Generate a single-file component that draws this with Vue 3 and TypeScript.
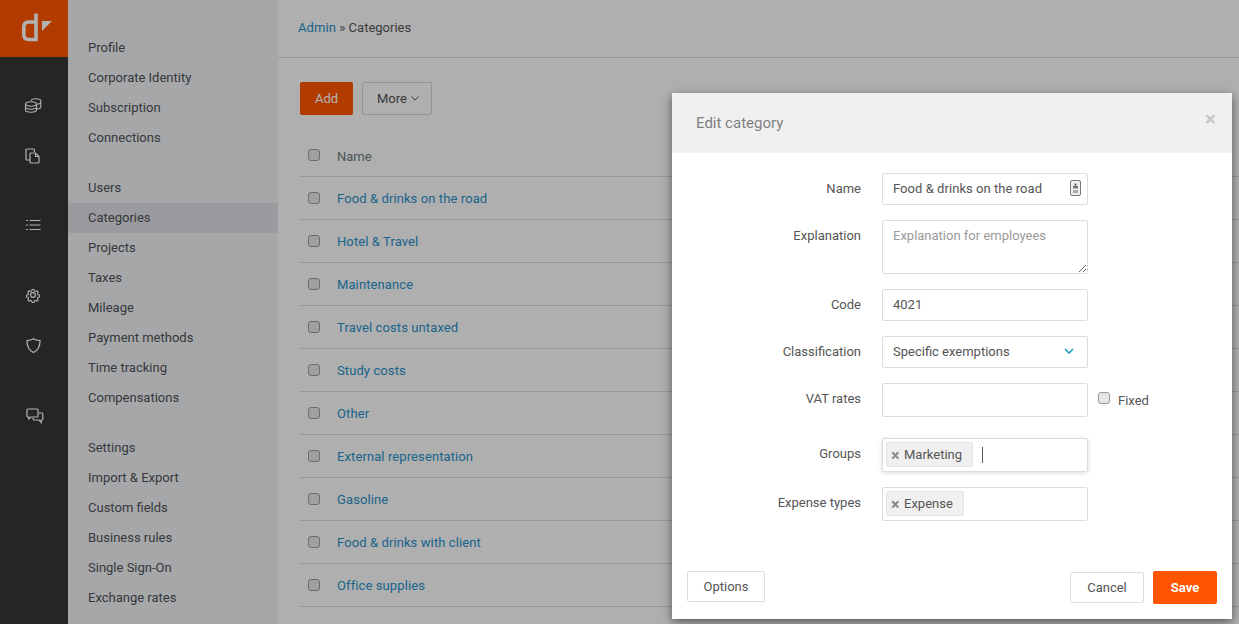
<script setup lang="ts">
const groups: string[][] = [
  ['Profile', 'Corporate Identity', 'Subscription', 'Connections'],
  ['Users', 'Categories', 'Projects', 'Taxes', 'Mileage', 'Payment methods', 'Time tracking', 'Compensations'],
  ['Settings', 'Import & Export', 'Custom fields', 'Business rules', 'Single Sign-On', 'Exchange rates'],
]
const rows: string[] = [
  'Food & drinks on the road', 'Hotel & Travel', 'Maintenance', 'Travel costs untaxed', 'Study costs',
  'Other', 'External representation', 'Gasoline', 'Food & drinks with client', 'Office supplies',
]
</script>

<template>
  <div class="page">
    <nav class="rail">
      <div class="logo">
        <svg width="68" height="57" viewBox="0 0 68 57">
          <path d="M36 13.5V39.5H29Q23.8 39.5 23.8 34.5V27Q23.8 22 29 22H36" fill="none" stroke="#fff" stroke-width="3.6"/>
          <path d="M42 21H52L42 31Z" fill="#fff"/>
        </svg>
      </div>
      <div class="rail-icons">
        <svg class="ri first" width="18" height="18" viewBox="0 0 18 18" fill="none" stroke="#fff" stroke-width="1.1">
          <ellipse cx="7" cy="8" rx="5.5" ry="2.2"/><path d="M1.500 8V14C1.500 15.200 4 16.200 7 16.200S12.500 15.200 12.500 14V8M1.500 11C1.500 12.200 4 13.200 7 13.200S12.500 12.200 12.500 11"/>
          <path d="M7 4.500C7.500 3.400 9.500 2.800 11.500 2.800C14.500 2.800 16.800 3.800 16.800 5V11C16.800 12 15 12.800 12.500 13M12.500 8.200C15 8.100 16.800 7.300 16.800 6"/>
        </svg>
        <svg class="ri second" width="16" height="18" viewBox="0 0 16 18" fill="none" stroke="#fff" stroke-width="1.2">
          <path d="M5 13H1.800A.8.8 0 0 1 1 12.200V2.800A.8.8 0 0 1 1.800 2H8.500A.8.8 0 0 1 9.300 2.800V5"/>
          <path d="M5 6.800A.8.8 0 0 1 5.800 6H10.500L14 9.500V15.200A.8.8 0 0 1 13.200 16H5.800A.8.8 0 0 1 5 15.200Z"/><path d="M10.500 6V9.500H14"/>
        </svg>
        <svg class="ri gap" width="16" height="14" viewBox="0 0 16 14" fill="none" stroke="#fff" stroke-width="1.2">
          <path d="M4.500 2.500H15.500M4.500 7H15.500M4.500 11.500H15.500M1 2.500H2.800M1 7H2.800M1 11.500H2.800"/>
        </svg>
        <svg class="ri gap2" width="16" height="16" viewBox="0 0 24 24" fill="none" stroke="#fff" stroke-width="1.800">
          <circle cx="12" cy="12" r="3.500"/>
          <path d="M10.300 2.500h3.400l.6 2.900 1.900.8 2.500-1.600 2.400 2.400-1.600 2.500.8 1.900 2.900.6v3.400l-2.900.6-.8 1.900 1.600 2.500-2.400 2.400-2.500-1.600-1.900.8-.6 2.900h-3.400l-.6-2.900-1.900-.8-2.500 1.600-2.400-2.400 1.600-2.500-.8-1.900-2.900-.6v-3.400l2.900-.6.8-1.900-1.600-2.500 2.400-2.400 2.500 1.600 1.900-.8z" transform="translate(1.600 1.600) scale(.87)"/>
        </svg>
        <svg class="ri shield" width="15" height="17" viewBox="0 0 16 17" fill="none" stroke="#fff" stroke-width="1.300">
          <path d="M8 1.200C10 2.500 12.500 3 15 3.200C15 9 13.500 13.500 8 16C2.500 13.500 1 9 1 3.200C3.500 3 6 2.500 8 1.200Z"/>
        </svg>
        <svg class="ri chat" width="18" height="16" viewBox="0 0 18 16" fill="none" stroke="#fff" stroke-width="1.200">
          <path d="M1.800 1H11.200A.9.9 0 0 1 12 1.800V8.200A.9.9 0 0 1 11.200 9H5L2.800 11V9H1.800A.9.9 0 0 1 1 8.200V1.800A.9.9 0 0 1 1.800 1Z"/>
          <path d="M12.500 5H16A.9.9 0 0 1 16.800 5.800V11.200A.9.9 0 0 1 16 12H15.200V14.500L13 12H8A.9.9 0 0 1 7.200 11.200V9.500"/>
        </svg>
      </div>
    </nav>

    <aside class="side">
      <ul v-for="(g, i) in groups" :key="i" class="side-group">
        <li v-for="item in g" :key="item" :class="{ active: item === 'Categories' }">{{ item }}</li>
      </ul>
    </aside>

    <main class="main">
      <header class="crumbs"><a class="link">Admin</a> » Categories</header>
      <div class="content">
        <div class="actions">
          <button class="btn primary add">Add</button>
          <button class="btn more">More
            <svg width="8" height="5" viewBox="0 0 8 5" fill="none" stroke="#555" stroke-width="1"><path d="M.5 .5L4 4L7.500 .5"/></svg>
          </button>
        </div>
        <div class="table">
          <div class="tr head"><input type="checkbox" class="check" /><span>Name</span></div>
          <div v-for="r in rows" :key="r" class="tr"><input type="checkbox" class="check" /><a class="link">{{ r }}</a></div>
        </div>
      </div>
    </main>

    <div class="overlay"></div>

    <section class="modal">
      <div class="modal-head">
        <h2>Edit category</h2>
        <span class="close">×</span>
      </div>
      <div class="form">
        <div class="row">
          <label>Name</label>
          <div class="field with-icon">
            <span>Food &amp; drinks on the road</span>
            <svg width="11" height="16" viewBox="0 0 11 16">
              <rect x=".5" y=".5" width="10" height="15" rx="1.500" fill="#eee" stroke="#777"/>
              <path d="M4.500 3.500H6.500V6H8V8.500H3V6H4.500Z" fill="#777"/><rect x="3" y="10" width="5" height="3" fill="#aaa"/>
            </svg>
          </div>
        </div>
        <div class="row">
          <label>Explanation</label>
          <textarea class="field area" placeholder="Explanation for employees"></textarea>
        </div>
        <div class="row"><label>Code</label><div class="field">4021</div></div>
        <div class="row">
          <label>Classification</label>
          <div class="field select">
            <span>Specific exemptions</span>
            <svg width="10" height="6" viewBox="0 0 10 6" fill="none" stroke="#1b9bc0" stroke-width="1.600"><path d="M1 1L5 5L9 1"/></svg>
          </div>
        </div>
        <div class="row vat">
          <label>VAT rates</label>
          <div class="field tall"></div>
          <label class="fixed"><input type="checkbox" class="check" /><span>Fixed</span></label>
        </div>
        <div class="row groups">
          <label>Groups</label>
          <div class="field tags focus">
            <span class="tag"><i>×</i>Marketing</span><span class="caret"></span>
          </div>
        </div>
        <div class="row">
          <label>Expense types</label>
          <div class="field tags">
            <span class="tag"><i>×</i>Expense</span>
          </div>
        </div>
      </div>
      <footer class="foot">
        <button class="btn white options">Options</button>
        <div class="foot-right">
          <button class="btn white cancel">Cancel</button>
          <button class="btn primary save">Save</button>
        </div>
      </footer>
    </section>
  </div>
</template>

<style>
html, body { margin: 0; height: 100%; overflow: hidden; background: #fff; }
</style>

<style scoped>
* { box-sizing: border-box; }
.page { position: relative; display: flex; width: 1239px; height: 624px; overflow: hidden; font-family: Roboto, "Liberation Sans", sans-serif; font-size: 13px; color: #555; background: #fbfbfb; }
.rail { flex: 0 0 68px; background: #353535; display: flex; flex-direction: column; }
.logo { height: 57px; background: #ff5500; }
.logo svg { display: block; }
.rail-icons { display: flex; flex-direction: column; align-items: center; padding-right: 2px; }
.ri { display: block; flex: none; }
.first { margin-top: 39px; }
.second { margin-top: 33px; }
.gap { margin-top: 53px; }
.gap2 { margin-top: 55px; }
.shield { margin-top: 34px; }
.chat { margin-top: 54px; margin-left: 3px; }
.side { flex: 0 0 210px; background: #eeeff2; padding-top: 33px; }
.side-group { list-style: none; margin: 0 0 20px; padding: 0; }
.side-group li { height: 30px; line-height: 29px; padding-left: 20px; color: #4f5258; }
.side-group li.active { background: #dcdfe2; }
.main { flex: 1; min-width: 0; }
.crumbs { height: 58px; padding: 0 20px; line-height: 55px; border-bottom: 1px solid #dcdcdc; color: #555; }
.link { color: #2790c8; letter-spacing: .1px; }
.content { padding: 24px 0 0 22px; }
.actions { display: flex; gap: 9px; height: 33px; }
.btn { font: inherit; border-radius: 2px; cursor: pointer; padding: 0; }
.primary { background: #ff5500; border: 0; color: #fff; }
.add { width: 53px; height: 33px; }
.more { width: 70px; height: 33px; background: transparent; border: 1px solid #d4d4d4; color: #555; padding-left: 2px; }
.more svg { margin-left: 1px; vertical-align: 2px; }
.table { margin-top: 19px; }
.tr { display: flex; align-items: center; height: 43px; border-bottom: 1px solid #dcdcdc; }
.tr.head { color: #6a7a7a; padding-top: 3px; }
.check { appearance: none; flex: none; width: 12px; height: 12px; margin: 0 17px 1px 8px; background: #e6e6e6; border: 1px solid #9b9b9b; border-radius: 3px; }
.head .check { margin-bottom: 4px; }
.overlay { position: absolute; inset: 0; background: rgba(0, 0, 0, .3); }
.modal { position: absolute; left: 672px; top: 93px; width: 560px; height: 526px; background: #fff; box-shadow: 0 3px 9px rgba(0, 0, 0, .5); display: flex; flex-direction: column; }
.modal-head { flex: none; height: 60px; background: #f0f0f0; display: flex; justify-content: space-between; padding: 0 16px 0 24px; }
.modal-head h2 { margin: 0; font-size: 15px; font-weight: 400; line-height: 60px; color: #808080; }
.close { font-size: 21px; font-weight: 700; color: #c8c8c8; line-height: 53px; }
.form { flex: 1; padding-top: 20px; }
.row { display: flex; margin-bottom: 15px; }
.row > label:first-child { flex: none; width: 189px; text-align: right; line-height: 31px; margin-right: 21px; }
.field { flex: none; width: 206px; height: 32px; border: 1px solid #ddd; border-radius: 2px; padding: 0 10px; font: inherit; color: #555; background: #fff; }
.with-icon, .select { display: flex; align-items: center; justify-content: space-between; }
.with-icon svg { margin-right: -4px; flex: none; }
.select svg { margin-right: 3px; flex: none; }
.field:not(.area):not(.tags) { display: flex; align-items: center; padding-bottom: 2px; }
.with-icon span { letter-spacing: .05px; }
.area { height: 54px; padding: 7px 10px; resize: vertical; display: block; outline: none; }
.area::placeholder { color: #9a9a9a; opacity: 1; }
.tall { height: 34px; }
.vat { margin-bottom: 21px; }
.vat .fixed { display: flex; align-items: center; margin-left: 10px; height: 34px; line-height: 34px; }
.fixed .check { margin: 0 8px 5px 0; }
.fixed span { padding-top: 1px; }
.tags { height: 34px; display: flex; align-items: center; padding: 0 3px 1px; }
.focus { box-shadow: 0 1px 4px rgba(0, 0, 0, .15); }
.groups { margin-bottom: 15px; }
.tag { display: flex; align-items: center; height: 25px; padding: 0 10px 0 3px; background: #f0f0f0; border: 1px solid #e4e4e4; border-radius: 2px; color: #555; }
.tag i { font-style: normal; font-weight: 700; font-size: 16px; line-height: 16px; color: #888; width: 14px; padding-left: 1px; text-align: left; margin-top: 2px; }
.caret { width: 1px; height: 16px; background: #555; margin-left: 9px; }
.foot { flex: none; display: flex; justify-content: space-between; align-items: flex-end; padding: 0 15px 15px; height: 48px; }
.foot-right { display: flex; gap: 9px; align-items: flex-end; }
.white { background: #fff; border: 1px solid #ddd; color: #555; }
.options { width: 78px; height: 31px; margin-bottom: 2px; }
.cancel { width: 74px; height: 31px; margin-bottom: 1px; }
.save { width: 64px; height: 33px; font-weight: 700; }
</style>
